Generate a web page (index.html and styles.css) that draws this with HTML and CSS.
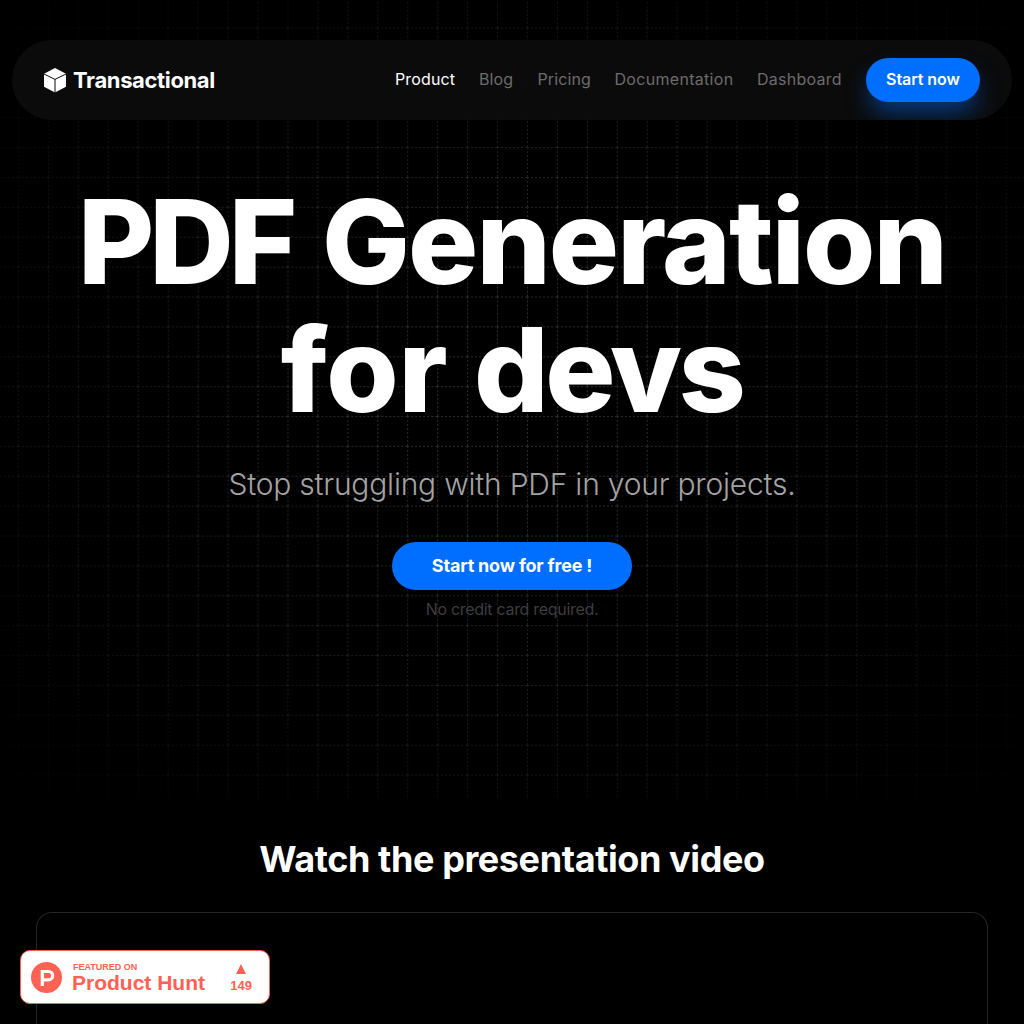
FILE: index.html
```html
<!DOCTYPE html>
<html lang="en">
<head>
<meta charset="utf-8">
<title>Transactional</title>
<link rel="stylesheet" href="styles.css">
</head>
<body>
<svg class="grid-bg" width="1024" height="800" aria-hidden="true">
  <defs>
    <pattern id="cell" x="18" y="27.6" width="29.94" height="29.88" patternUnits="userSpaceOnUse">
      <path d="M.5 0V29.88M0 .5H29.94" stroke="#2b2b2b" stroke-width="1" stroke-dasharray="2 2" fill="none"/>
    </pattern>
  </defs>
  <rect width="1024" height="799" fill="url(#cell)"/>
</svg>
<header class="nav">
  <a class="brand">
    <svg width="22" height="25" viewBox="0 0 22 25"><path d="M11 0 22 5.7V18.8L11 24.5 0 18.8V5.7Z" fill="#fff"/><path d="M0 6 11 11.4 22 6M11 11.4V25" stroke="#0b0b0b" stroke-width="1" fill="none"/></svg>
    <span class="brand-name">Transactional</span>
  </a>
  <nav class="links">
    <a class="active l1">Product</a><a class="l2">Blog</a><a class="l3">Pricing</a><a class="l4">Documentation</a><a class="l5">Dashboard</a>
    <a class="btn btn-small"><span>Start now</span></a>
  </nav>
</header>
<main>
  <section class="hero">
    <h1><span class="h-a"><span class="w1">PDF</span> <span class="w2">Generation</span></span><span class="h-b"><span class="w3">for</span> <span class="w4">devs</span></span></h1>
    <p class="lead"><span>Stop struggling with PDF in your projects.</span></p>
    <a class="btn btn-large"><span>Start now for free !</span></a>
    <p class="note"><span>No credit card required.</span></p>
  </section>
  <section class="video">
    <h2><span>Watch the presentation video</span></h2>
    <div class="frame"></div>
  </section>
</main>
<a class="hunt">
  <svg width="31" height="31" viewBox="0 0 31 31"><circle cx="15.5" cy="15.5" r="15.5" fill="#ff6154"/><path d="M11.3 24V9.5H17.5A4 4 0 0 1 17.5 17.8H11.5" fill="none" stroke="#fff" stroke-width="3.2"/></svg>
  <span class="hunt-text"><small>FEATURED ON</small><b>Product Hunt</b></span>
  <span class="votes"><i class="triangle"></i>149</span>
</a>
</body>
</html>
```
FILE: styles.css
```css
* { box-sizing: border-box; }
body { margin: 0; height: 1024px; overflow: hidden; background: #000; color: #fff; font-family: Inter, "Liberation Sans", sans-serif; }
h1, h2, p { margin: 0; }
span { white-space: nowrap; }
.grid-bg { position: absolute; top: 0; left: 0; z-index: -1; -webkit-mask-image: radial-gradient(ellipse 680px 620px at 512px 400px, #000 20%, transparent 100%); mask-image: radial-gradient(ellipse 680px 620px at 512px 400px, #000 20%, transparent 100%); }
.nav { display: flex; align-items: center; justify-content: space-between; height: 80px; margin: 40px 12px 0; padding: 0 32px; border-radius: 40px; background: rgba(12, 12, 12, .92); overflow: hidden; }
.brand { display: flex; align-items: center; gap: 7px; }
.brand-name { font-size: 22px; font-weight: 700; letter-spacing: -.36px; line-height: 26px; padding-bottom: 1px; }
.links { display: flex; align-items: center; gap: 24px; font-size: 16px; color: #6c6c6c; }
.links a { white-space: nowrap; }
.links a:not(.btn) { padding-bottom: 2px; }
.l1 { width: 60px; letter-spacing: .15px; }
.l2 { width: 34.5px; letter-spacing: .1px; }
.l3 { width: 53px; letter-spacing: .1px; }
.l4 { width: 118.5px; letter-spacing: .3px; }
.l5 { width: 85px; letter-spacing: .25px; }
.links .active { color: #fff; }
.btn { display: flex; align-items: center; justify-content: center; background: #006eff; color: #fff; }
.btn span { padding-bottom: 2px; }
.btn-small { width: 114px; height: 44px; border-radius: 22px; font-weight: 600; letter-spacing: -.05px; box-shadow: 0 14px 24px -4px rgba(0, 110, 255, .5); }
.hero { display: flex; flex-direction: column; align-items: center; padding-top: 58px; }
h1 { display: flex; flex-direction: column; align-items: center; font-size: 117px; line-height: 128px; font-weight: 800; }
.w1 { margin-right: 4px; letter-spacing: -5px; }
.w2 { letter-spacing: -1.9px; }
.w3 { margin-right: 1px; letter-spacing: -.2px; }
.w4 { letter-spacing: -3.4px; }
.h-b { padding-right: 1px; }
.lead { margin-top: 30px; font-size: 30px; line-height: 40px; font-weight: 300; letter-spacing: -.21px; color: #a3a3a3; }
.btn-large { width: 240px; height: 48px; margin-top: 38px; border-radius: 24px; font-size: 18px; font-weight: 700; letter-spacing: -.2px; }
.note { margin-top: 7px; font-size: 16px; line-height: 24px; letter-spacing: -.3px; color: #3d3d3d; }
.video { padding: 218px 36px 0; }
h2 { text-align: center; font-size: 36px; line-height: 40px; font-weight: 700; letter-spacing: -.4px; }
.frame { height: 112px; margin-top: 33px; border: 1px solid #262626; border-bottom: 0; border-radius: 16px 16px 0 0; }
.hunt { position: fixed; left: 20px; top: 950px; width: 250px; height: 54px; display: flex; align-items: center; padding: 0 17px 0 10px; border: 1px solid #ff6154; border-radius: 10px; background: #fff; color: #ff6154; font-family: "Liberation Sans", Arial, sans-serif; font-weight: 700; }
.hunt-text { display: flex; flex-direction: column; margin-left: 10px; padding-top: 2px; }
.hunt-text small { padding-left: 1px; font-size: 9px; line-height: 10px; }
.hunt-text b { font-size: 21px; line-height: 22px; }
.votes { display: flex; flex-direction: column; align-items: center; margin-left: auto; padding-top: 3px; gap: 4px; font-size: 13px; line-height: 15px; }
.triangle { border: 5.5px solid transparent; border-top: 0; border-bottom: 10px solid #ff6154; }
```
